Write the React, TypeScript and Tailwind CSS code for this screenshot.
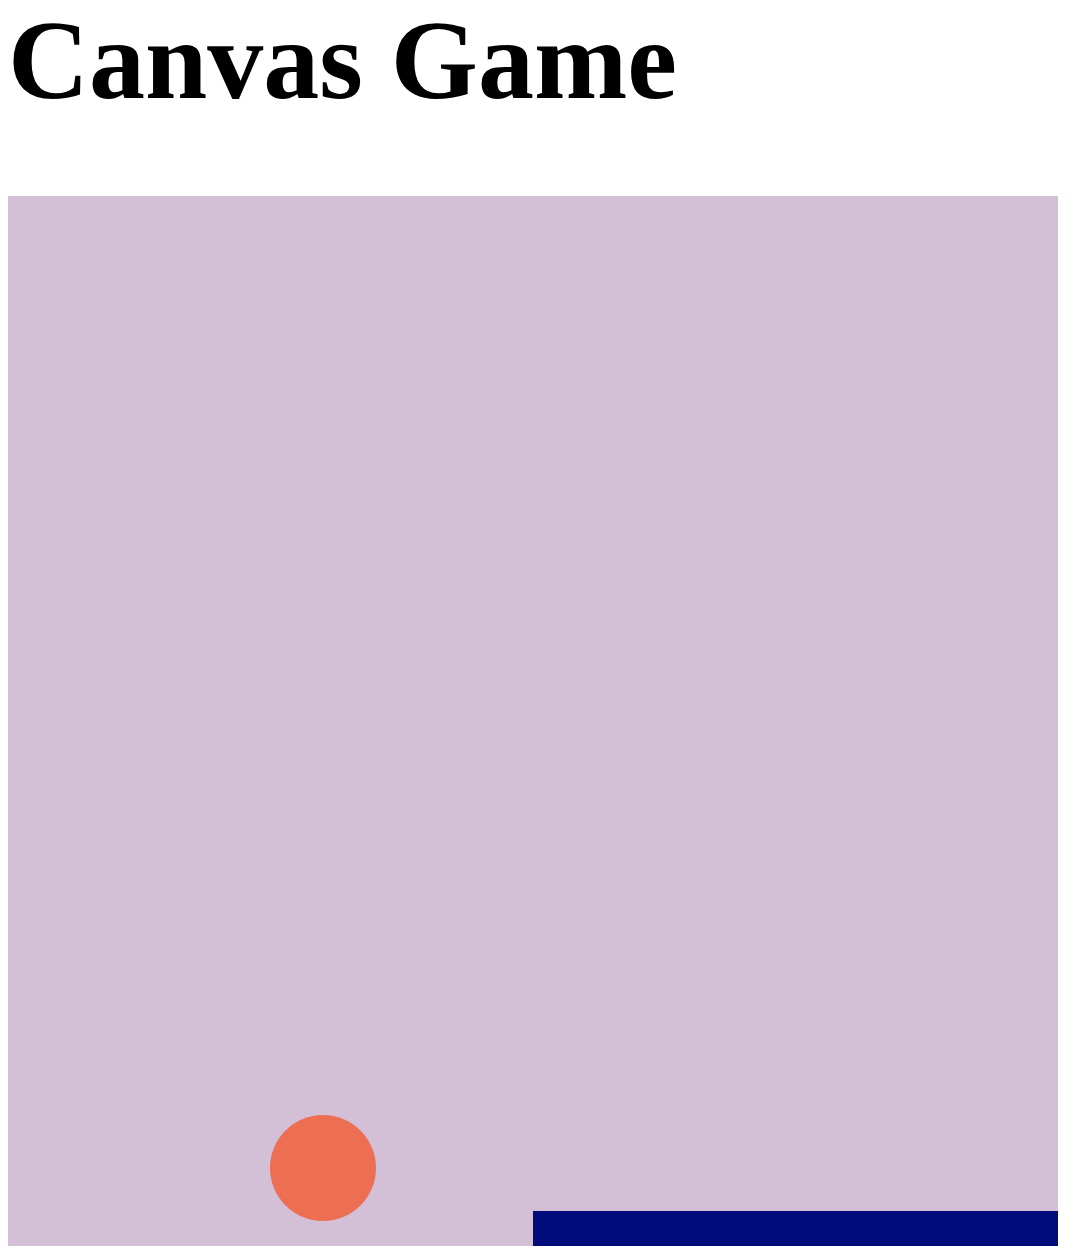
export default function App() {
  return (
    <div className="bg-white min-h-screen px-2" style={{ fontFamily: '"Liberation Serif", "Times New Roman", serif' }}>
      <h1 className="m-0 text-[112px] leading-[120px] font-bold text-black font-['Liberation_Serif',serif]">Canvas Game</h1>
      <div className="mt-[76px] w-[1050px] h-[1050px] bg-[#d3bfd6]">
        <svg width="1050" height="1050" viewBox="0 0 1050 1050" className="block">
          <circle cx="315" cy="972" r="53" fill="#ec6e53" />
          <rect x="525" y="1015" width="525" height="35" fill="#000c7b" />
        </svg>
      </div>
    </div>
  );
}
